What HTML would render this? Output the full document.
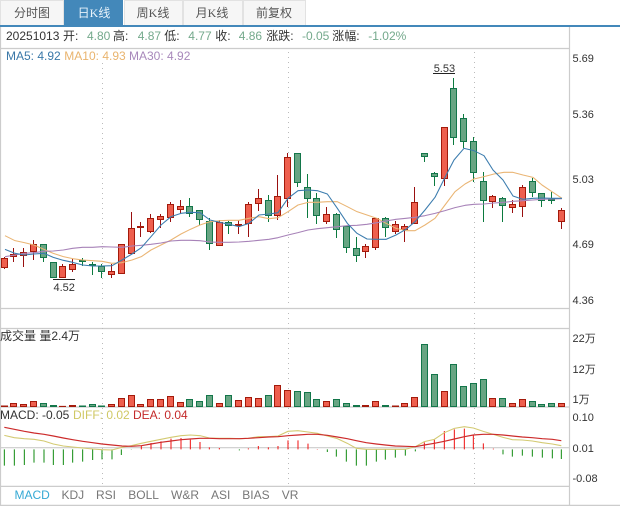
<!DOCTYPE html>
<html><head><meta charset="utf-8"><style>
html,body{margin:0;padding:0;background:#fff;width:620px;height:506px;overflow:hidden}
svg{display:block}
text{font-family:"Liberation Sans","WenQuanYi Zen Hei","Noto Sans CJK SC",sans-serif;font-size:12px;fill:#333}
.t text{font-family:"Liberation Serif","WenQuanYi Zen Hei","Noto Sans CJK SC",serif;text-anchor:middle;fill:#555}
.v{fill:#74a98c}
.a text{font-size:11px;fill:#333}
.b text{fill:#777}
</style></head><body>
<svg width="620" height="506" viewBox="0 0 620 506" xmlns="http://www.w3.org/2000/svg">
<!-- tabs -->
<g fill="#f6f6f6" stroke="#e2e2e2">
<rect x="0.5" y="0.5" width="63" height="25"/>
<rect x="124.5" y="0.5" width="58" height="25"/>
<rect x="183.5" y="0.5" width="59" height="25"/>
<rect x="243.5" y="0.5" width="62" height="25"/>
</g>
<rect x="64" y="0" width="59" height="26" fill="#4388ba"/>
<rect x="0" y="25" width="620" height="2" fill="#4388ba"/>
<g class="t">
<text x="32" y="17">分时图</text>
<text x="94" y="17" style="fill:#e8f2fa">日K线</text>
<text x="153" y="17">周K线</text>
<text x="212" y="17">月K线</text>
<text x="274" y="17">前复权</text>
</g>
<!-- frame -->
<path fill="none" stroke="#ccc" stroke-width="1.2" d="M.5 27V505.4H620M569.5 27V505M0 48.5H569M0 308.5H569M0 328.5H569M0 407H569M0 447.7H569M0 486.4H569"/>
<!-- grid -->
<path fill="none" stroke="#bbb" stroke-width="1" stroke-dasharray="1 4" d="M102.5 63V303M102.5 313V484M288.5 52V303M288.5 313V484M474.5 52V303M474.5 313V484"/>
<!-- volume -->
<path fill="#ee5f4e" stroke="#a31a0b" d="M1.5 406h6v.5h-6zM10.5 403.5h6v3h-6zM20.5 404.5h6v2h-6zM30.5 401.5h6v5h-6zM59.5 406.4h6v.1h-6zM69.5 405.5h6v1h-6zM108.5 404.5h6v2h-6zM118.5 398.5h6v8h-6zM128.5 395.5h6v11h-6zM137.5 404.5h6v2h-6zM147.5 399.5h6v7h-6zM157.5 399.5h6v7h-6zM167.5 396.5h6v10h-6zM177.5 402.5h6v4h-6zM216.5 403.5h6v3h-6zM235.5 400.5h6v6h-6zM245.5 397.5h6v9h-6zM255.5 398.5h6v8h-6zM274.5 385.5h6v21h-6zM284.5 390.5h6v16h-6zM323.5 401.5h6v5h-6zM362.5 405.5h6v1h-6zM372.5 401.5h6v5h-6zM392.5 406h6v.5h-6zM401.5 403.5h6v3h-6zM411.5 397.5h6v9h-6zM441.5 391.5h6v15h-6zM489.5 398.5h6v8h-6zM509.5 403.5h6v3h-6zM519.5 399.5h6v7h-6zM558.5 403.5h6v3h-6z"/>
<path fill="#68a583" stroke="#13764a" d="M40.5 403.5h6v3h-6zM50.5 405.5h6v1h-6zM79.5 406h6v.5h-6zM89.5 404.5h6v2h-6zM98.5 406h6v.5h-6zM186.5 399.5h6v7h-6zM196.5 401.5h6v5h-6zM206.5 395.5h6v11h-6zM225.5 395.5h6v11h-6zM265.5 395.5h6v11h-6zM294.5 391.5h6v15h-6zM304.5 392.5h6v14h-6zM313.5 399.5h6v7h-6zM333.5 399.5h6v7h-6zM343.5 403.5h6v3h-6zM353.5 405.5h6v1h-6zM382.5 405.5h6v1h-6zM421.5 344.5h6v62h-6zM431.5 374.5h6v32h-6zM450.5 364.5h6v42h-6zM460.5 386.5h6v20h-6zM470.5 383.5h6v23h-6zM480.5 379.5h6v27h-6zM499.5 398.5h6v8h-6zM529.5 401.5h6v5h-6zM538.5 404.5h6v2h-6zM548.5 403.5h6v3h-6z"/>
<!-- wicks -->
<path fill="none" stroke="#990f0f" d="M4.5 257V269M13.5 248V262M23.5 248V267M33.5 240V260M62.5 264V277M72.5 259V272M111.5 264V278M131.5 212V253M140.5 222V237M150.5 214V233M160.5 214V228M170.5 202V222M180.5 200V214M219.5 220V246M238.5 220V234M248.5 202V237M258.5 189V211M277.5 175V220M287.5 153V207M326.5 207V224M365.5 244V258M375.5 218V250M395.5 221V234M404.5 224V242M414.5 187V224M444.5 127V186M492.5 195V208M512.5 200V213M522.5 185V217M561.5 208V229"/>
<path fill="none" stroke="#0b7a3e" d="M43.5 245V262M82.5 258V266M92.5 262V275M101.5 264V278M189.5 198V217M199.5 210V225M209.5 218V250M228.5 221V234M268.5 195V222M297.5 153V187M307.5 174V218M316.5 193V224M336.5 213V238M346.5 226V253M356.5 237V262M385.5 217V237M424.5 153V162M434.5 172V186M453.5 78V145M463.5 114V148M473.5 137V182M483.5 172V222M502.5 197V222M532.5 178V197M541.5 193V207M551.5 192V204"/>
<!-- candle bodies -->
<path fill="#ee5f4e" stroke="#a31a0b" d="M1.5 258.5h6v9h-6zM10.5 254.5h6v2h-6zM20.5 252.5h6v3h-6zM30.5 244.5h6v7h-6zM59.5 266.5h6v11h-6zM69.5 264.5h6v5h-6zM108.5 271.5h6v3h-6zM118.5 244.5h6v29h-6zM128.5 228.5h6v25h-6zM137.5 226.5h6v1h-6zM147.5 218.5h6v13h-6zM157.5 216.5h6v3h-6zM167.5 204.5h6v13h-6zM177.5 206.5h6v3h-6zM216.5 222.5h6v23h-6zM235.5 224.5h6v1h-6zM245.5 204.5h6v19h-6zM255.5 198.5h6v5h-6zM274.5 196.5h6v19h-6zM284.5 157.5h6v41h-6zM323.5 214.5h6v7h-6zM362.5 246.5h6v5h-6zM372.5 218.5h6v29h-6zM392.5 224.5h6v7h-6zM401.5 226.5h6v3h-6zM411.5 202.5h6v21h-6zM441.5 127.5h6v51h-6zM489.5 196.5h6v5h-6zM509.5 204.5h6v3h-6zM519.5 187.5h6v19h-6zM558.5 210.5h6v11h-6z"/>
<path fill="#68a583" stroke="#13764a" d="M40.5 244.5h6v13h-6zM50.5 262.5h6v15h-6zM79.5 260.5h6v1h-6zM89.5 264.5h6v1h-6zM98.5 266.5h6v5h-6zM186.5 206.5h6v7h-6zM196.5 210.5h6v9h-6zM206.5 221.5h6v22h-6zM225.5 222.5h6v3h-6zM265.5 200.5h6v15h-6zM294.5 153.5h6v29h-6zM304.5 187.5h6v11h-6zM313.5 198.5h6v17h-6zM333.5 214.5h6v15h-6zM343.5 226.5h6v21h-6zM353.5 248.5h6v7h-6zM382.5 218.5h6v9h-6zM421.5 153.5h6v3h-6zM431.5 173.5h6v3h-6zM450.5 88.5h6v49h-6zM460.5 118.5h6v23h-6zM470.5 141.5h6v31h-6zM480.5 181.5h6v19h-6zM499.5 198.5h6v7h-6zM529.5 181.5h6v11h-6zM538.5 193.5h6v7h-6zM548.5 199.5h6v1h-6z"/>
<!-- MA lines -->
<g transform="translate(0,170) scale(.33333)" fill="none" stroke-width="3.2" stroke-linejoin="round">
<polyline stroke="#eab574" points="15,197 45,212 73,218 102,225 132,238 160,250 190,260 218,266 248,270 278,272 306,274 336,280 366,278 396,270 424,260 453,240 483,225 513,210 543,192 571,178 600,165 630,155 660,152 687,151 717,151 747,145 777,140 807,146 834,143 864,125 894,105 924,97 952,97 982,95 1012,95 1042,110 1071,125 1101,135 1131,145 1158,160 1188,175 1218,182 1245,182 1275,165 1305,145 1335,105 1365,65 1395,42 1422,27 1452,20 1482,12 1512,7 1539,7 1569,15 1599,22 1626,45 1656,65 1686,85"/>
<polyline stroke="#a782b8" points="15,260 45,255 73,250 102,248 132,244 160,243 190,240 218,235 248,232 278,232 306,230 336,231 366,232 396,228 424,226 453,223 483,219 513,213 543,211 571,211 600,212 630,216 660,217 687,217 717,216 747,214 777,211 807,208 834,203 864,195 894,188 924,180 952,176 982,173 1012,170 1042,167 1071,166 1101,163 1131,158 1158,153 1188,148 1218,145 1245,142 1275,137 1305,130 1335,122 1365,113 1395,106 1422,103 1452,102 1482,99 1512,97 1539,94 1569,92 1599,90 1626,88 1656,87 1686,86"/>
<polyline stroke="#3b7cae" points="15,238 45,250 73,255 102,252 132,250 160,262 190,271 218,277 248,285 278,288 306,288 336,287 366,270 396,252 424,233 453,200 483,165 513,140 543,130 571,127 600,128 630,150 660,157 687,163 717,170 747,160 777,135 807,132 834,128 864,85 894,62 924,60 952,62 982,72 1012,115 1042,160 1071,190 1101,207 1131,208 1158,208 1188,195 1218,178 1245,155 1275,120 1305,82 1335,22 1362,-30 1392,-65 1422,-58 1452,-43 1479,0 1509,30 1539,78 1569,88 1599,85 1626,84 1656,85 1686,85"/>
</g>
<!-- min/max labels -->
<path stroke="#222" fill="none" d="M433 73.5H455M53 279.5H75"/>
<g class="a">
<text x="433.7" y="72">5.53</text>
<text x="53.5" y="291">4.52</text>
<text x="572.5" y="62">5.69</text>
<text x="572.5" y="118">5.36</text>
<text x="572.5" y="183">5.03</text>
<text x="572.5" y="248">4.69</text>
<text x="572.5" y="304">4.36</text>
<text x="572.5" y="342">22万</text>
<text x="572.5" y="373">12万</text>
<text x="572.5" y="403">1万</text>
<text x="572.5" y="421">0.10</text>
<text x="572.5" y="452">0.01</text>
<text x="572.5" y="482">-0.08</text>
</g>
<!-- MACD bars -->
<g transform="translate(0,340) scale(.33333)" fill="none" stroke-width="3">
<path stroke="#0f8a0f" d="M13 328V377M43 328V377M73 328V375M102 328V368M132 328V368M160 328V375M190 328V375M218 328V368M248 328V365M278 328V360M306 328V358M336 328V358M364 328V345M394 328V329M718 328V331M982 328V336M1009 328V350M1039 328V365M1069 328V377M1099 328V377M1129 328V365M1156 328V359M1186 328V353M1216 328V347M1246 328V334M1509 329V343M1537 328V350M1567 328V347M1597 328V350M1627 328V353M1657 328V355M1684 328V357"/>
<path stroke="#f01010" d="M424 328V317M453 328V309M483 328V304M513 328V296M543 328V294M571 328V299M600 328V306M628 328V322M658 328V324M745 328V325M775 328V318M805 328V322M834 328V318M864 328V301M894 328V301M924 328V311M952 328V327M1273 328V307M1303 328V299M1333 328V273M1363 328V268M1393 328V266M1420 328V285M1450 328V310M1480 328V326"/>
<polyline stroke="#d3ca72" stroke-width="3.2" points="13,286 43,293 73,296 102,298 132,303 160,312 190,318 218,321 248,324 278,327 306,329 336,330 366,322 394,317 424,310 453,304 483,298 513,292 543,287 571,285 600,287 628,294 658,295 688,295 718,296 745,295 775,290 805,290 834,288 864,274 894,272 924,276 952,280 982,288 1012,296 1042,310 1069,325 1099,328 1129,328 1156,328 1186,328 1216,328 1246,320 1273,305 1303,298 1333,278 1363,265 1393,260 1420,264 1450,274 1480,283 1509,292 1537,299 1567,300 1597,303 1627,308 1657,312 1684,317"/>
<polyline stroke="#cc2b2b" stroke-width="3.6" points="13,262 43,268 73,274 102,279 132,283 160,288 190,294 218,299 248,304 278,308 306,312 336,315 366,318 394,319 424,317 453,312 483,307 513,303 543,299 571,297 600,295 628,295 658,296 688,296 718,296 745,295 775,293 805,291 834,290 864,287 894,285 924,283 952,283 982,286 1012,291 1042,296 1069,302 1099,308 1129,312 1156,315 1186,318 1216,319 1246,320 1273,315 1303,310 1333,304 1363,297 1393,290 1420,285 1450,283 1480,283 1509,285 1537,288 1567,291 1597,293 1627,296 1657,298 1684,302"/>
</g>
<!-- header -->
<text x="6" y="40">20251013</text>
<text x="63" y="40">开:</text><text class="v" x="87" y="40">4.80</text>
<text x="113" y="40">高:</text><text class="v" x="137.7" y="40">4.87</text>
<text x="164.3" y="40">低:</text><text class="v" x="188.3" y="40">4.77</text>
<text x="215.3" y="40">收:</text><text class="v" x="238.7" y="40">4.86</text>
<text x="266.3" y="40">涨跌:</text><text class="v" x="302" y="40">-0.05</text>
<text x="332.3" y="40">涨幅:</text><text class="v" x="368.3" y="40">-1.02%</text>
<text x="6" y="60" style="fill:#3a78a8">MA5: 4.92</text>
<text x="64.3" y="60" style="fill:#e9b46e">MA10: 4.93</text>
<text x="129" y="60" style="fill:#a888bb">MA30: 4.92</text>
<text x="0" y="340">成交量 量2.4万</text>
<text x="0" y="419">MACD: -0.05</text>
<text x="73" y="419" style="fill:#d0c864">DIFF: 0.02</text>
<text x="133" y="419" style="fill:#c42a2a">DEA: 0.04</text>
<g class="b">
<text x="14.5" y="499" style="fill:#35a9d4">MACD</text>
<text x="61.5" y="499">KDJ</text>
<text x="96" y="499">RSI</text>
<text x="128.3" y="499">BOLL</text>
<text x="171" y="499">W&amp;R</text>
<text x="211" y="499">ASI</text>
<text x="242.3" y="499">BIAS</text>
<text x="281.7" y="499">VR</text>
</g>
</svg>
</body></html>
